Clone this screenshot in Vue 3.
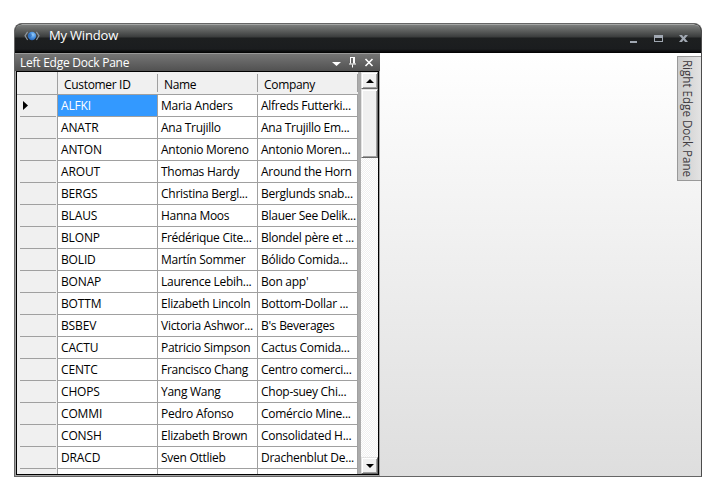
<script setup>
const rows = [
  ['ALFKI', 'Maria Anders', 'Alfreds Futterki...'],
  ['ANATR', 'Ana Trujillo', 'Ana Trujillo Em...'],
  ['ANTON', 'Antonio Moreno', 'Antonio Moren...'],
  ['AROUT', 'Thomas Hardy', 'Around the Horn'],
  ['BERGS', 'Christina Bergl...', 'Berglunds snab...'],
  ['BLAUS', 'Hanna Moos', 'Blauer See Delik...'],
  ['BLONP', 'Frédérique Cite...', 'Blondel père et ...'],
  ['BOLID', 'Martín Sommer', 'Bólido Comida...'],
  ['BONAP', 'Laurence Lebih...', "Bon app'"],
  ['BOTTM', 'Elizabeth Lincoln', 'Bottom-Dollar ...'],
  ['BSBEV', 'Victoria Ashwor...', "B's Beverages"],
  ['CACTU', 'Patricio Simpson', 'Cactus Comida...'],
  ['CENTC', 'Francisco Chang', 'Centro comerci...'],
  ['CHOPS', 'Yang Wang', 'Chop-suey Chi...'],
  ['COMMI', 'Pedro Afonso', 'Comércio Mine...'],
  ['CONSH', 'Elizabeth Brown', 'Consolidated H...'],
  ['DRACD', 'Sven Ottlieb', 'Drachenblut De...'],
  ['', '', ''],
]
const columns = ['Customer ID', 'Name', 'Company']
</script>

<template>
  <main class="page">
    <section class="window">
      <header class="titlebar">
        <svg class="logo" width="16" height="12" viewBox="0 0 16 12">
          <defs>
            <radialGradient id="globe" cx=".6" cy=".35" r=".7">
              <stop offset="0" stop-color="#9ccffa" />
              <stop offset=".5" stop-color="#4a93e2" />
              <stop offset="1" stop-color="#2560b0" />
            </radialGradient>
          </defs>
          <path d="M3.6 1.8 1 5.8 3.6 10M12.4 1.8 15 5.8 12.4 10" fill="none" stroke="#8d969e" stroke-width="1.2" />
          <circle cx="8" cy="6" r="4.2" fill="url(#globe)" />
          <path d="M4.5 4 7 3.4 8.2 5.5 6.5 7.5 4.5 6.3z" fill="#245ca8" opacity=".5" />
        </svg>
        <h1>My Window</h1>
        <svg class="controls" width="60" height="12" viewBox="0 0 60 12">
          <path d="M1 8h7v2H1z" fill="#a1a8b2" />
          <path d="M25 2h9v7h-9zM26 5v3h7V5z" fill="#a1a8b2" fill-rule="evenodd" />
          <path d="M50 2h3l1.5 2L56 2h3l-3 3.5L59 9h-3l-1.5-2L53 9h-3l3-3.5z" fill="#a1a8b2" />
        </svg>
      </header>
      <div class="body">
        <section class="pane">
          <header class="pane-head">
            <h2>Left Edge Dock Pane</h2>
            <svg width="44" height="12" viewBox="0 0 44 12">
              <path d="M0 5h9L4.5 9z" fill="#fff" />
              <path d="M18 1h5M18.5 1v6M21.5 1v6M22.5 1v6M17 7.5h7M20.5 8v3" transform="translate(0 -.5)" fill="none" stroke="#fff" />
              <path d="m33.5 2 7 7m0-7-7 7" fill="none" stroke="#fff" stroke-width="1.6" />
            </svg>
          </header>
          <div class="pane-body">
            <div class="grid">
              <div class="row head">
                <div class="handle"></div>
                <div v-for="c in columns" :key="c" class="cell">{{ c }}</div>
              </div>
              <div v-for="(r, i) in rows" :key="i" class="row">
                <div class="handle">
                  <svg v-if="i === 0" width="5" height="9" viewBox="0 0 5 9"><path d="M0 0 5 4.5 0 9z" /></svg>
                </div>
                <div v-for="(t, j) in r" :key="j" class="cell" :class="{ code: j === 0, selected: i === 0 && j === 0 }">{{ t }}</div>
              </div>
            </div>
            <div class="scroll">
              <div class="button"><svg width="8" height="4" viewBox="0 0 8 4"><path d="M0 4 4 0 8 4z" /></svg></div>
              <div class="thumb"></div>
              <div class="track"></div>
              <div class="button"><svg width="8" height="4" viewBox="0 0 8 4"><path d="M0 0 4 4 8 0z" /></svg></div>
            </div>
          </div>
        </section>
        <div class="client">
          <div class="tab"><span>Right Edge Dock Pane</span></div>
        </div>
      </div>
    </section>
  </main>
</template>

<style>
body { background: #fff; }
</style>

<style scoped>
* { box-sizing: border-box; }
.page { width: 715px; height: 500px; padding: 23px 13px 23px 14px; font-family: "Open Sans", "Noto Sans", sans-serif; overflow: hidden; }
.window { width: 688px; height: 454px; border: 1px solid #666; border-right-color: #4c4c4c; border-radius: 8px 8px 0 0; background: #000; overflow: hidden; display: flex; flex-direction: column; }
.titlebar { height: 29px; flex: none; display: flex; align-items: flex-start; border-top: 1px solid #a5a7a6; border-radius: 7px 7px 0 0; background: linear-gradient(#7b7d7c 0, #606261 5px, #3a3c3c 12px, #1d1f20 13px, #1b1d1f 24px, #08090a 27px, #000 28px); padding: 0 11px 0 9px; }
.logo { margin-top: 5px; }
h1 { margin: 0 0 0 9px; font-size: 13px; line-height: 20px; font-weight: 400; color: #fff; letter-spacing: -.18px; flex: 1; }
.controls { margin: 8px 1px 0 0; }
.body { flex: 1; display: flex; min-height: 0; }
.pane { width: 365px; flex: none; display: flex; flex-direction: column; background: #a3a3a3; padding: 0 1px 1px 1px; }
.pane-head { height: 18px; flex: none; margin: 0 -1px; padding: 0 5px; display: flex; justify-content: space-between; border-top: 1px solid #999; background: linear-gradient(#757575, #515151); }
.pane-head h2 { margin: 0; font-size: 12px; line-height: 18px; font-weight: 400; color: #fff; letter-spacing: -.25px; }
.pane-head svg { margin: 3px -1px 0 0; }
.pane-body { flex: 1; min-height: 0; display: flex; border: 1px solid #000; background: #ababab; justify-content: space-between; }
.grid { width: 341px; overflow: hidden; font-size: 12px; letter-spacing: -.27px; line-height: 19px; color: #000; }
.row { height: 22px; display: flex; }
.handle { width: 41px; flex: none; background: linear-gradient(#a0a0a0, #a0a0a0) 3px 21px / 36px 1px no-repeat #f0f0f0; border-right: 1px solid #a0a0a0; padding: 6px 0 0 6px; }
.handle svg { display: block; }
.cell { width: 100px; flex: none; border-right: 1px solid #a0a0a0; border-bottom: 1px solid #a0a0a0; background: #fff; padding: 1px 0 0 3px; white-space: nowrap; overflow: hidden; }
.code { letter-spacing: -.15px; }
.selected { background: #3399ff; color: #fff; }
.head { height: 23px; }
.head .handle { background: linear-gradient(#a0a0a0, #a0a0a0) 0 22px / 40px 1px no-repeat #f0f0f0; }
.head .cell { background: linear-gradient(#a0a0a0, #a0a0a0) 99px 2px / 1px 18px no-repeat #f0f0f0; border-right: 0; padding: 4px 0 0 6px; line-height: 18px; letter-spacing: -.32px; }
.scroll { width: 17px; display: flex; flex-direction: column; background: #f0f0f0; }
.button { height: 17px; flex: none; display: flex; align-items: center; justify-content: center; }
.button, .thumb { background: #f0f0f0; border: 1px solid; border-color: #e3e3e3 #696969 #696969 #e3e3e3; box-shadow: inset 1px 1px #fff, inset -1px -1px #a0a0a0; }
.thumb { height: 69px; flex: none; }
.track { flex: 1; background: conic-gradient(#fff 25%, #f0f0f0 0 50%, #fff 0 75%, #f0f0f0 0) 0 0 / 2px 2px; }
.client { flex: 1; display: flex; justify-content: flex-end; align-items: flex-start; padding-top: 3px; background: linear-gradient(#fff, #dedede); }
.tab { width: 24px; height: 125px; border: 1px solid #999; border-right: 0; background: linear-gradient(90deg, #ccc, #e3e3e3); color: #3f3b40; }
.tab span { display: block; writing-mode: vertical-rl; font-size: 12px; line-height: 18px; padding-top: 3px; white-space: nowrap; transform: scaleY(.967); transform-origin: top; }
</style>
